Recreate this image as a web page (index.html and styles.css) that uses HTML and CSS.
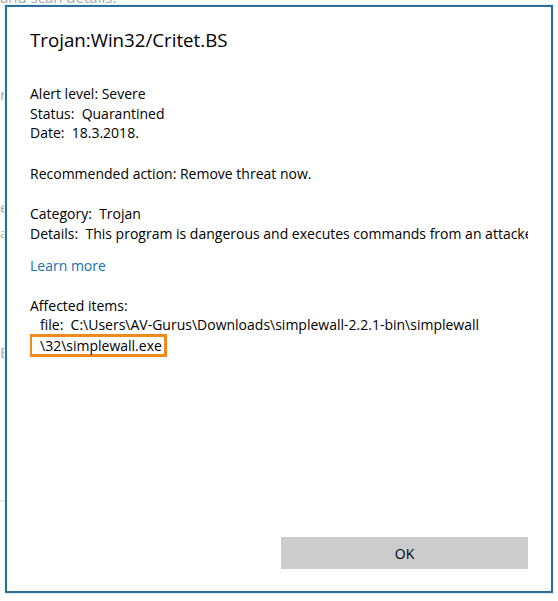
FILE: index.html
```html
<!DOCTYPE html>
<html>
<head>
<meta charset="utf-8">
<link rel="stylesheet" href="styles.css">
</head>
<body>
<div class="backdrop">
  <p class="bg-line bg-top">and scan details.</p>
  <p class="bg-line bg-r">r</p>
  <p class="bg-line bg-e">e</p>
  <p class="bg-line bg-a">a</p>
  <p class="bg-line bg-E">E</p>
  <div class="bg-rule"></div>
</div>

<div class="dialog">
  <div class="content">
    <h1 class="title">Trojan:Win32/Critet.BS</h1>
    <div class="group first">
      <p>Alert level: Severe</p>
      <p>Status:&nbsp; Quarantined</p>
      <p>Date:&nbsp; 18.3.2018.</p>
    </div>
    <div class="group">
      <p>Recommended action: Remove threat now.</p>
    </div>
    <div class="group">
      <p>Category:&nbsp; Trojan</p>
      <p>Details:&nbsp; This program is dangerous and executes commands from an attacker.</p>
    </div>
    <a class="link" href="#">Learn more</a>
    <div class="group affected">
      <p>Affected items:</p>
      <p class="indent">file:&nbsp; C:\Users\AV-Gurus\Downloads\simplewall-2.2.1-bin\simplewall</p>
      <p class="indent"><span class="highlight">\32\simplewall.exe</span></p>
    </div>
  </div>
  <div class="footer">
    <button class="ok">OK</button>
  </div>
</div>
</body>
</html>
```

FILE: styles.css
```css
html, body {
  margin: 0;
  padding: 0;
  background: #ffffff;
  width: 558px;
  height: 601px;
  overflow: hidden;
  font-family: "Open Sans", "Noto Sans", sans-serif;
}

.backdrop {
  color: #a8a8a8;
  font-size: 15px;
  line-height: 19px;
}
.bg-line { margin: 0; }
.bg-top { margin-top: -12px; }
.bg-r { margin-top: 78px; }
.bg-e { margin-top: 94px; }
.bg-a { margin-top: 7px; font-size: 12px; }
.bg-E { margin-top: 100px; }
.bg-rule {
  margin-top: 138px;
  height: 2px;
  width: 8px;
  background: #e8e8e8;
}

.dialog {
  position: absolute;
  left: 5px;
  top: 5px;
  width: 548px;
  height: 588px;
  box-sizing: border-box;
  border: 2px solid #2b6f98;
  box-shadow: 0 0 0 1px #dcf5f8;
  background: #ffffff;
  display: flex;
  flex-direction: column;
  padding: 0 23px 22px 23px;
  color: #000000;
}

.content {
  flex: 1;
  overflow: hidden;
  font-size: 14px;
  line-height: 19.5px;
}

.content p {
  margin: 0;
  white-space: nowrap;
}

.title {
  margin: 19px 0 0 0;
  font-size: 18.7px;
  font-weight: normal;
  line-height: 28px;
}

.group { margin-top: 21px; }
.group.first { margin-top: 30px; }

.link {
  display: block;
  margin-top: 13px;
  color: #1b6fb3;
  text-decoration: none;
}

.group.affected { margin-top: 20px; }
.indent { padding-left: 10px; }

.highlight {
  display: inline-block;
  margin-left: -11px;
  padding: 0 2px 0 8px;
  border: 3px solid #f08a1c;
  line-height: 17px;
  margin-top: -1px;
}

.footer {
  display: flex;
  justify-content: flex-end;
}

.ok {
  width: 247px;
  height: 32px;
  border: none;
  background: #cccccc;
  color: #000000;
  font-family: "Open Sans", "Noto Sans", sans-serif;
  font-size: 14px;
  padding: 0;
}
```
